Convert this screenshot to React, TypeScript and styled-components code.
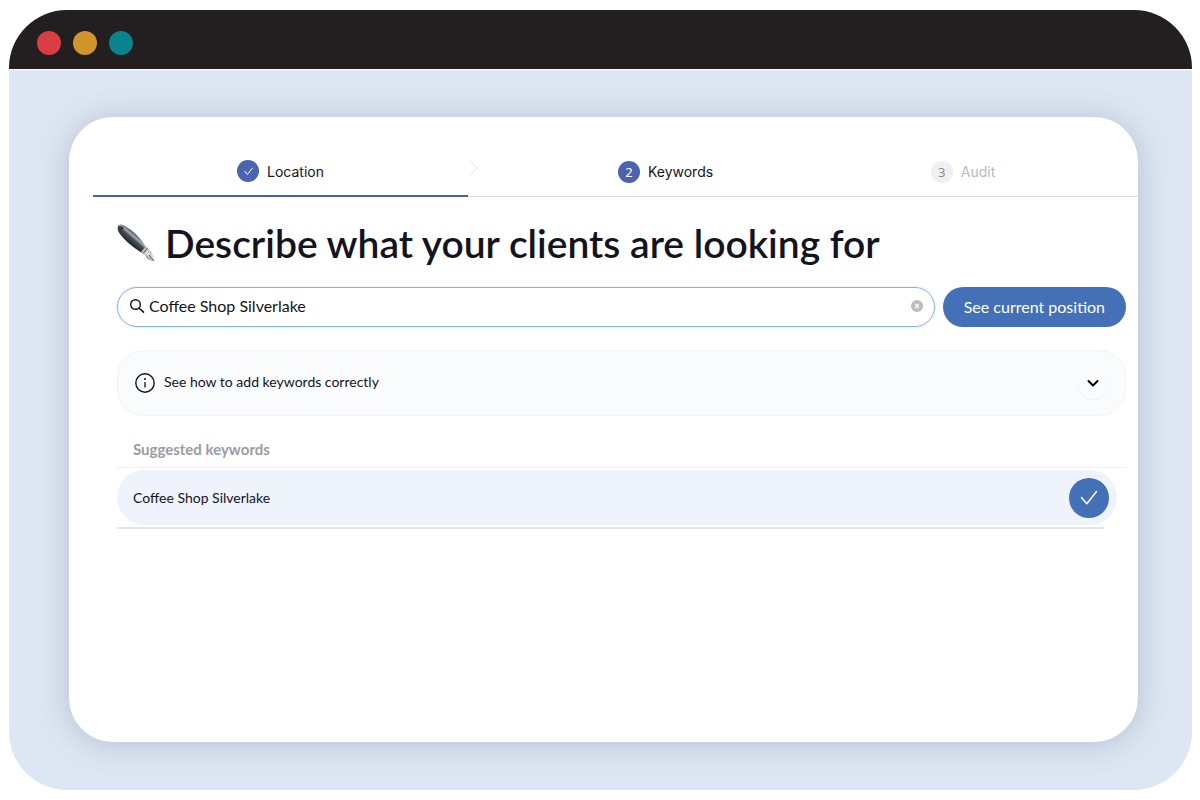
import React, { useState } from "react";
import styled, { createGlobalStyle } from "styled-components";

const GlobalStyle = createGlobalStyle`
  *, *::before, *::after { box-sizing: border-box; }
  body {
    margin: 0;
    background: #fff;
    color: #14141f;
    font-family: Lato, "Open Sans", sans-serif;
  }
  button, input { font: inherit; color: inherit; }
  button { border: 0; padding: 0; background: none; cursor: pointer; }
`;

const Page = styled.div`
  display: flex;
  min-height: 100vh;
  padding: 10px 8px 10px 9px;
`;

const Window = styled.div`
  flex: 1;
  display: flex;
  flex-direction: column;
  border-radius: 58px;
  overflow: hidden;
  background: #dde7f3;
`;

const TitleBar = styled.div`
  display: flex;
  align-items: center;
  gap: 12px;
  height: 60px;
  padding: 6px 28px 0;
  background: #231f20;
  border-bottom: 1px solid #fff;
`;

const Dot = styled.span<{ $color: string }>`
  width: 24px;
  height: 24px;
  border-radius: 50%;
  background: ${(p) => p.$color};
`;

const Card = styled.main`
  flex: 1;
  display: flex;
  flex-direction: column;
  margin: 47px 54px 48px 60px;
  padding-top: 30px;
  border-radius: 44px;
  background: #fff;
  box-shadow: 0 2px 30px rgba(85, 95, 125, 0.3);
`;

const Steps = styled.ol`
  display: grid;
  grid-template-columns: 375fr 395fr 275fr;
  margin: 0 0 0 24px;
  padding: 0;
  list-style: none;
  font-family: Inter, sans-serif;
  font-size: 14px;
`;

const Step = styled.li<{ $done?: boolean; $last?: boolean; $muted?: boolean }>`
  position: relative;
  display: flex;
  align-items: center;
  justify-content: center;
  gap: 8px;
  height: 50px;
  padding-right: ${(p) => (p.$last ? "75px" : "0")};
  border-bottom: ${(p) => (p.$done ? "2px solid #4a5fb0" : "1px solid #dcdde1")};
  color: ${(p) => (p.$muted ? "#b9babd" : "#14141f")};
`;

const StepBadge = styled.span<{ $muted?: boolean }>`
  display: flex;
  align-items: center;
  justify-content: center;
  width: 22px;
  height: 22px;
  border-radius: 50%;
  background: ${(p) => (p.$muted ? "#f0f0f1" : "#4c63b2")};
  color: ${(p) => (p.$muted ? "#8b8c90" : "#fff")};
  font-family: "Noto Sans", sans-serif;
  font-size: 13px;
`;

const StepArrow = styled.svg`
  position: absolute;
  left: 100%;
  top: 11px;
`;

const Content = styled.div`
  display: flex;
  flex-direction: column;
  padding: 22px 12px 24px 48px;
`;

const Heading = styled.h1`
  display: flex;
  align-items: center;
  gap: 10px;
  margin: 0;
  font-size: 39px;
  line-height: 48px;
  font-weight: 600;
`;

const SearchForm = styled.form`
  display: flex;
  gap: 8px;
  margin-top: 20px;
`;

const SearchField = styled.label`
  flex: 1;
  display: flex;
  align-items: center;
  gap: 4px;
  height: 40px;
  padding: 0 11px 2px;
  border: 1px solid #84b3e6;
  border-radius: 20px;
  box-shadow: 0 0 2px 1px #e3effb;
`;

const SearchInput = styled.input`
  flex: 1;
  min-width: 0;
  padding: 0;
  border: 0;
  outline: 0;
  background: none;
  font-size: 16px;
  line-height: 24px;
`;

const ClearButton = styled.button`
  display: flex;
`;

const SubmitButton = styled.button`
  height: 40px;
  padding: 0 21px 2px;
  border-radius: 20px;
  background: #4470b8;
  color: #fff;
  font-size: 16px;
`;

const InfoToggle = styled.button`
  display: flex;
  align-items: center;
  gap: 9px;
  height: 66px;
  margin-top: 23px;
  padding: 0 17px;
  border: 1px solid #f2f4f5;
  border-radius: 26px;
  background: #fafbfd;
  font-size: 14px;
  text-align: left;
`;

const InfoText = styled.span`
  flex: 1;
  padding-bottom: 3px;
`;

const ChevronCircle = styled.span`
  display: flex;
  align-items: center;
  justify-content: center;
  width: 30px;
  height: 32px;
  border-radius: 50%;
  box-shadow: 0 1px 1px #f0f1f3;
`;

const SectionTitle = styled.h2`
  margin: 22px 0 0;
  padding: 0 16px 7px;
  border-bottom: 1px solid #f0f0f2;
  color: #9b9ca1;
  font-size: 15px;
  line-height: 22px;
  font-weight: 700;
`;

const KeywordList = styled.ul`
  margin: 2px 0 0;
  padding: 0 9px 0 0;
  list-style: none;
`;

const KeywordRow = styled.li`
  display: flex;
  align-items: center;
  justify-content: space-between;
  height: 55px;
  padding: 0 8px 0 16px;
  border-radius: 28px;
  background: #eff3fb;
  font-size: 14px;
`;

const SelectButton = styled.button`
  display: flex;
  align-items: center;
  justify-content: center;
  width: 40px;
  height: 40px;
  border-radius: 50%;
  background: #4470b8;
`;

const RowRule = styled.hr`
  width: auto;
  height: 2px;
  margin: 2px 22px 0 0;
  border: 0;
  background: #e3e4e8;
`;

const PenIcon = () => (
  <svg width="38" height="40" viewBox="0 0 38 40" aria-hidden="true">
    <defs>
      <linearGradient id="barrel" gradientUnits="userSpaceOnUse" x1="18" y1="11" x2="12" y2="18">
        <stop offset="0" stopColor="#5a6064" />
        <stop offset="0.3" stopColor="#a3abb0" />
        <stop offset="0.55" stopColor="#4b5156" />
        <stop offset="1" stopColor="#2c3034" />
      </linearGradient>
      <linearGradient id="nib" gradientUnits="userSpaceOnUse" x1="34" y1="29" x2="29" y2="35">
        <stop offset="0" stopColor="#a9bccb" />
        <stop offset="0.5" stopColor="#e9e6df" />
        <stop offset="1" stopColor="#8b7a68" />
      </linearGradient>
    </defs>
    <path d="M1 3C2 1 5 1 8 3C15 7 23 14 29 24L25 30C15 24 5 15 1 8Q0 5 1 3Z" fill="url(#barrel)" />
    <path d="M2 4Q4 2 7 5L4 9Q1 6 2 4Z" fill="#34393d" />
    <path d="M24 29L29 23L32 26.500L27.500 32Z" fill="#b9bfc2" />
    <path d="M26 30.500L30.500 25" stroke="#62686c" strokeWidth="1" />
    <path d="M28 31.500L32 27C35 29 36.500 33 37 38C33 37.500 29 36 28 31.500Z" fill="url(#nib)" />
    <path d="M32 32L37 38" stroke="#50483f" strokeWidth="1" />
  </svg>
);

const CheckIcon = ({ size, stroke }: { size: number; stroke: number }) => (
  <svg width={size} height={size} viewBox="0 0 18 18" fill="none" aria-hidden="true">
    <path d="M1.500 8.500L6.800 14.800L16.500 2.500" stroke="#fff" strokeWidth={stroke} strokeLinecap="round" strokeLinejoin="round" />
  </svg>
);

export default function App() {
  const [keyword, setKeyword] = useState("Coffee Shop Silverlake");
  const [selected, setSelected] = useState(true);

  return (
    <>
      <GlobalStyle />
      <Page>
        <Window>
          <TitleBar>
            <Dot $color="#d93e43" />
            <Dot $color="#d0962b" />
            <Dot $color="#08848d" />
          </TitleBar>
          <Card>
            <Steps>
              <Step $done>
                <StepBadge>
                  <CheckIcon size={9} stroke={2} />
                </StepBadge>
                Location
                <StepArrow width="12" height="20" viewBox="0 0 12 20" fill="none" aria-hidden="true">
                  <path d="M1.500 2L9.500 10L1.500 18" stroke="#e6e6e9" />
                </StepArrow>
              </Step>
              <Step aria-current="step">
                <StepBadge>2</StepBadge>
                Keywords
              </Step>
              <Step $last $muted>
                <StepBadge $muted>3</StepBadge>
                Audit
              </Step>
            </Steps>
            <Content>
              <Heading>
                <PenIcon />
                Describe what your clients are looking for
              </Heading>
              <SearchForm onSubmit={(e) => e.preventDefault()}>
                <SearchField>
                  <svg width="16" height="16" viewBox="0 0 16 16" fill="none" aria-hidden="true">
                    <circle cx="6.500" cy="6.500" r="4.800" stroke="#14141f" strokeWidth="1.400" />
                    <path d="M10 10L14.500 14.200" stroke="#14141f" strokeWidth="1.600" strokeLinecap="round" />
                  </svg>
                  <SearchInput
                    aria-label="Keyword"
                    value={keyword}
                    onChange={(e) => setKeyword(e.target.value)}
                  />
                  <ClearButton type="button" aria-label="Clear keyword" onClick={() => setKeyword("")}>
                    <svg width="12" height="12" viewBox="0 0 12 12" aria-hidden="true">
                      <circle cx="6" cy="6" r="6" fill="#bdbdbf" />
                      <path d="M4.200 3.800L7.800 8.200M7.800 3.800L4.200 8.200" stroke="#fff" strokeWidth="1.300" />
                    </svg>
                  </ClearButton>
                </SearchField>
                <SubmitButton type="submit">See current position</SubmitButton>
              </SearchForm>
              <InfoToggle type="button" aria-expanded="false">
                <svg width="20" height="20" viewBox="0 0 20 20" fill="none" aria-hidden="true">
                  <circle cx="10" cy="10" r="9.200" stroke="#14141f" strokeWidth="1.400" />
                  <path d="M10 9V14.500" stroke="#14141f" strokeWidth="1.300" />
                  <circle cx="10" cy="6" r="1" fill="#14141f" />
                </svg>
                <InfoText>See how to add keywords correctly</InfoText>
                <ChevronCircle>
                  <svg width="12" height="8" viewBox="0 0 12 8" fill="none" aria-hidden="true">
                    <path d="M1.500 2L6 6.500L10.500 2" stroke="#000" strokeWidth="2" strokeLinecap="round" strokeLinejoin="round" />
                  </svg>
                </ChevronCircle>
              </InfoToggle>
              <SectionTitle>Suggested keywords</SectionTitle>
              <KeywordList>
                <KeywordRow>
                  Coffee Shop Silverlake
                  <SelectButton
                    type="button"
                    aria-label="Select Coffee Shop Silverlake"
                    aria-pressed={selected}
                    onClick={() => setSelected(!selected)}
                  >
                    {selected && <CheckIcon size={18} stroke={1.5} />}
                  </SelectButton>
                </KeywordRow>
              </KeywordList>
              <RowRule />
            </Content>
          </Card>
        </Window>
      </Page>
    </>
  );
}
